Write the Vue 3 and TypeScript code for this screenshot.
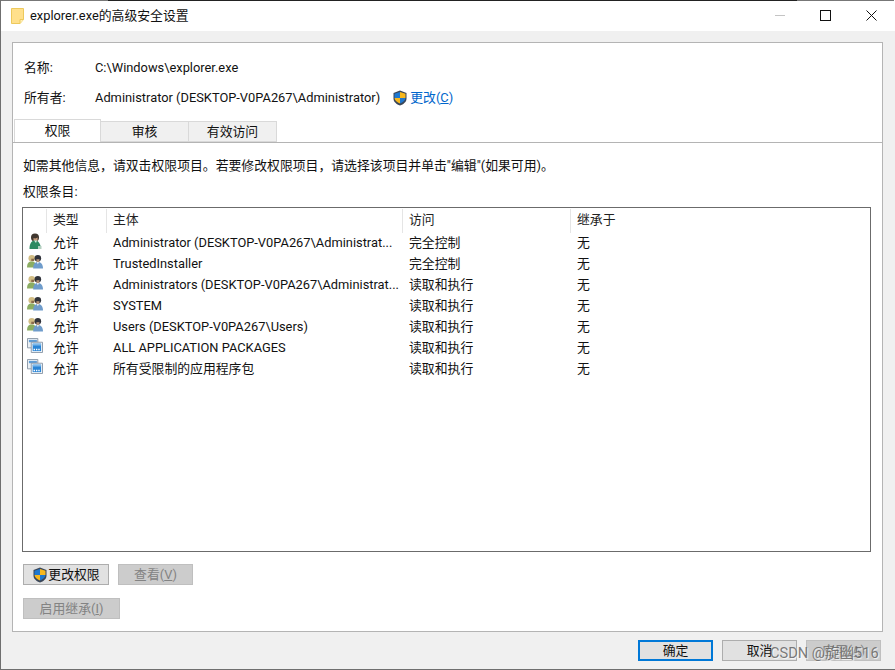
<script setup lang="ts">
interface Row { icon: 'admin' | 'users' | 'pkg'; kind: string; name: string; access: string; from: string }
const rows: Row[] = [
  { icon: 'admin', kind: '允许', name: 'Administrator (DESKTOP-V0PA267\\Administrat...', access: '完全控制', from: '无' },
  { icon: 'users', kind: '允许', name: 'TrustedInstaller', access: '完全控制', from: '无' },
  { icon: 'users', kind: '允许', name: 'Administrators (DESKTOP-V0PA267\\Administrat...', access: '读取和执行', from: '无' },
  { icon: 'users', kind: '允许', name: 'SYSTEM', access: '读取和执行', from: '无' },
  { icon: 'users', kind: '允许', name: 'Users (DESKTOP-V0PA267\\Users)', access: '读取和执行', from: '无' },
  { icon: 'pkg', kind: '允许', name: 'ALL APPLICATION PACKAGES', access: '读取和执行', from: '无' },
  { icon: 'pkg', kind: '允许', name: '所有受限制的应用程序包', access: '读取和执行', from: '无' },
]
</script>

<template>
  <div class="win">
    <div class="edge"></div>
    <header class="titlebar">
      <svg class="folder" width="13" height="16" viewBox="0 0 13 16">
        <path d="M.5.5h12v11l-3.500 4H.5z" fill="#ffe08c" stroke="#edc95c" />
        <path d="M9 15.500v-4h3.500" fill="#fff0b8" stroke="#edc95c" />
      </svg>
      <span class="title">explorer.exe的高级安全设置</span>
      <div class="caption">
        <div class="capbtn"><i class="min"></i></div>
        <div class="capbtn"><i class="max"></i></div>
        <div class="capbtn">
          <svg width="11" height="11" viewBox="0 0 11 11"><path d="M.5.5l10 10M10.500.5l-10 10" stroke="#111" fill="none" /></svg>
        </div>
      </div>
    </header>

    <main class="panel">
      <div class="info">
        <div class="inforow"><span class="lab">名称:</span><span>C:\Windows\explorer.exe</span></div>
        <div class="inforow">
          <span class="lab">所有者:</span>
          <span>Administrator (DESKTOP-V0PA267\Administrator)</span>
          <svg class="shield owner" width="16" height="16" viewBox="0 0 16 16">
            <path d="M8 .5 14.500 3v5.500c0 3.500-3 5.800-6.500 7-3.500-1.200-6.500-3.500-6.500-7V3z" fill="#3a4658" />
            <path d="M8 2v6H2.500V3.800z" fill="#1f78cf" /><path d="M8 2l5.500 1.800V8H8z" fill="#f7b81e" />
            <path d="M8 8h5.500c-.2 2.700-2.600 4.400-5.500 5.500z" fill="#1f78cf" /><path d="M8 8v5.500C5.100 12.400 2.700 10.700 2.500 8z" fill="#f7b81e" />
          </svg>
          <a class="link">更改(<u>C</u>)</a>
        </div>
      </div>

      <nav class="tabs">
        <div class="tab active">权限</div>
        <div class="tab t2">审核</div>
        <div class="tab t3">有效访问</div>
      </nav>

      <section class="body">
        <p class="hint">如需其他信息，请双击权限项目。若要修改权限项目，请选择该项目并单击"编辑"(如果可用)。</p>
        <p class="listlabel">权限条目:</p>

        <div class="list">
          <div class="row head">
            <div class="c0"></div>
            <div class="c1 hc">类型</div>
            <div class="c2 hc">主体</div>
            <div class="c3 hc">访问</div>
            <div class="c4 hc">继承于</div>
          </div>
          <div v-for="r in rows" :key="r.name" class="row item">
            <div class="c0">
              <svg v-if="r.icon === 'admin'" width="16" height="17" viewBox="0 0 16 17">
                <circle cx="8" cy="4.500" r="4" fill="#40372f" />
                <path d="M6.500 5c1 .6 3 .6 4.200-.4l-.3 3.600H6.500z" fill="#c59c7c" />
                <path d="M2.500 16c0-5.500 2-8.500 5.500-8.500s5.500 3 6 8.500z" fill="#2e8a62" />
                <path d="M7 7.500h3l-1 2.500z" fill="#d8ebe0" />
                <path d="M11 13h3.500v3H11z" fill="#b4cfc0" />
              </svg>
              <svg v-else-if="r.icon === 'users'" width="17" height="15" viewBox="0 0 18 16">
                <circle cx="5" cy="4.500" r="3.500" fill="#d2bd84" />
                <path d="M4.500 5h3v2.500h-3z" fill="#8a6a4c" />
                <path d="M0 14.500c0-4.500 1.500-6.500 5-6.500s4.500 2 4.500 6.500z" fill="#8cad62" />
                <circle cx="11.500" cy="4.500" r="3.500" fill="#30323a" />
                <path d="M10 5.500h3.200V8.500H10z" fill="#b08f74" />
                <path d="M6.500 15.500c0-4.500 1.500-7 5-7s5.500 2.500 5.500 7z" fill="#6f9ccb" />
                <path d="M10.200 8.500h2.600L11.500 11z" fill="#e8eef4" />
              </svg>
              <svg v-else width="16" height="15" viewBox="0 0 17 16">
                <path d="M.5 .5h11v10H.5z" fill="#eaf0f5" stroke="#8b98a6" />
                <path d="M2 2h8.500v2.500H2z" fill="#5f9dd6" />
                <path d="M4.500 4.500h12v11h-12z" fill="#f4f7fa" stroke="#8b98a6" />
                <path d="M6 6h9v8H6z" fill="#2a85d6" />
                <path d="M6 6h9v2H6z" fill="#7db8ea" />
                <path d="M7 11.500h1.500V13H7zM9.500 11.500H11V13H9.500zM12 11.500h1.500V13H12z" fill="#fff" />
              </svg>
            </div>
            <div class="c1">{{ r.kind }}</div>
            <div class="c2">{{ r.name }}</div>
            <div class="c3">{{ r.access }}</div>
            <div class="c4">{{ r.from }}</div>
          </div>
        </div>

        <div class="actions">
          <button class="btn b1">
            <svg class="shield" width="16" height="16" viewBox="0 0 16 16">
              <path d="M8 .5 14.500 3v5.500c0 3.500-3 5.800-6.500 7-3.500-1.200-6.500-3.500-6.500-7V3z" fill="#3a4658" />
              <path d="M8 2v6H2.500V3.800z" fill="#1f78cf" /><path d="M8 2l5.500 1.800V8H8z" fill="#f7b81e" />
              <path d="M8 8h5.500c-.2 2.700-2.600 4.400-5.500 5.500z" fill="#1f78cf" /><path d="M8 8v5.500C5.100 12.400 2.700 10.700 2.500 8z" fill="#f7b81e" />
            </svg>更改权限
          </button>
          <button class="btn off b2">查看(<u>V</u>)</button>
        </div>
        <div class="actions second">
          <button class="btn off b3">启用继承(<u>I</u>)</button>
        </div>
      </section>
    </main>

    <footer class="foot">
      <button class="btn fb primary">确定</button>
      <button class="btn fb">取消</button>
      <button class="btn fb off">应用(<u>A</u>)</button>
      <span class="mark">CSDN @旋幽516</span>
    </footer>
  </div>
</template>

<style>
html, body { margin: 0; background: #f0f0f0; }
</style>

<style scoped>
.win {
  position: relative;
  box-sizing: border-box;
  width: 895px;
  height: 670px;
  background: #f0f0f0;
  border-left: 1px solid #6f6f6f;
  border-bottom: 1px solid #6f6f6f;
  display: flex;
  flex-direction: column;
  font: 12.850px/16px Roboto, "Noto Sans CJK SC", sans-serif;
  color: #111;
  overflow: hidden;
}
.edge {
  height: 1px;
  flex: none;
  background: linear-gradient(90deg, #777 0 107px, #222 107px 796px, #777 796px 893px, #fff 893px);
}
.titlebar {
  height: 30px;
  flex: none;
  background: #fff;
  display: flex;
  align-items: center;
  padding: 0 0 1px 10px;
  box-sizing: border-box;
}
.title { margin-left: 6px; }
.caption { margin-left: auto; display: flex; align-items: center; padding-right: 1px; }
.capbtn { width: 45.500px; height: 29px; display: flex; align-items: center; justify-content: center; }
.min { width: 10px; height: 1px; background: #c4c4c4; }
.max { width: 9px; height: 9px; border: 1px solid #111; }
.panel {
  margin: 11px 12px 0 11px;
  height: 590px;
  box-sizing: border-box;
  border: 1px solid #b4b4b4;
  background: #fff;
  flex: none;
  display: flex;
  flex-direction: column;
}
.info { padding: 17px 0 0 11px; height: 77px; box-sizing: border-box; }
.inforow { display: flex; align-items: center; height: 16px; margin-bottom: 14px; }
.lab { width: 71px; }
.owner { margin-left: 12px; }
.link { color: #0066cc; margin-left: 2px; }
.tabs { display: flex; height: 22px; padding-left: 1px; border-bottom: 1px solid #b4b4b4; box-sizing: content-box; }
.tab {
  box-sizing: border-box;
  height: 21px;
  margin-top: 1px;
  background: #f0f0f0;
  border: 1px solid #d9d9d9;
  border-left: 0;
  text-align: center;
  line-height: 19px;
}
.tab.active { width: 87px; height: 23px; margin-top: -1px; background: #fff; border: 1px solid #d9d9d9; border-bottom: 0; line-height: 22px; position: relative; }
.t2 { width: 88px; }
.t3 { width: 88px; }
.body { padding: 0 10px; flex: 1; display: flex; flex-direction: column; }
.hint { margin: 15px 0 0; }
.listlabel { margin: 10px 0 0; }
.list {
  margin: 7px 1px 0 -1px;
  height: 345px;
  box-sizing: border-box;
  border: 1px solid #6b6b6b;
  background: #fff;
}
.row { display: flex; }
.head { height: 24px; color: #222; padding-top: 1px; box-sizing: content-box; }
.head .hc { border-left: 1px solid #e5e5e5; line-height: 22px; box-sizing: border-box; }
.item { height: 21px; line-height: 20px; }
.c0 { width: 23px; flex: none; position: relative; }
.c0 svg { position: absolute; left: 4px; top: 0; }
.c1 { width: 60px; flex: none; padding-left: 6px; box-sizing: border-box; }
.c2 { width: 296px; flex: none; padding-left: 6px; box-sizing: border-box; white-space: nowrap; }
.c3 { width: 168px; flex: none; padding-left: 6px; box-sizing: border-box; }
.c4 { flex: 1; padding-left: 6px; box-sizing: border-box; }
.item .c1, .item .c2, .item .c3, .item .c4 { padding-left: 7px; }
.actions { display: flex; gap: 9px; margin-top: 12px; }
.second { margin-top: 13px; }
.btn {
  box-sizing: border-box;
  height: 21px;
  padding: 0;
  background: #e1e1e1;
  border: 1px solid #adadad;
  font: inherit;
  color: #111;
  display: flex;
  align-items: center;
  justify-content: center;
}
.off { background: #cccccc; border-color: #bfbfbf; color: #838383; }
.b1 { width: 86px; }
.b2 { width: 75px; }
.b3 { width: 97px; }
.shield { flex: none; }
.foot {
  flex: 1;
  display: flex;
  gap: 9px;
  justify-content: flex-end;
  padding: 8px 14px 0 0;
}
.fb { width: 75px; }
.primary { border: 2px solid #0078d7; }
.mark {
  position: absolute;
  left: 769px;
  bottom: 7px;
  font-size: 14.600px;
  line-height: 18px;
  color: rgba(100, 100, 100, .85);
  text-shadow: 1px 1px 1px rgba(255, 255, 255, .8);
  white-space: nowrap;
}
</style>
